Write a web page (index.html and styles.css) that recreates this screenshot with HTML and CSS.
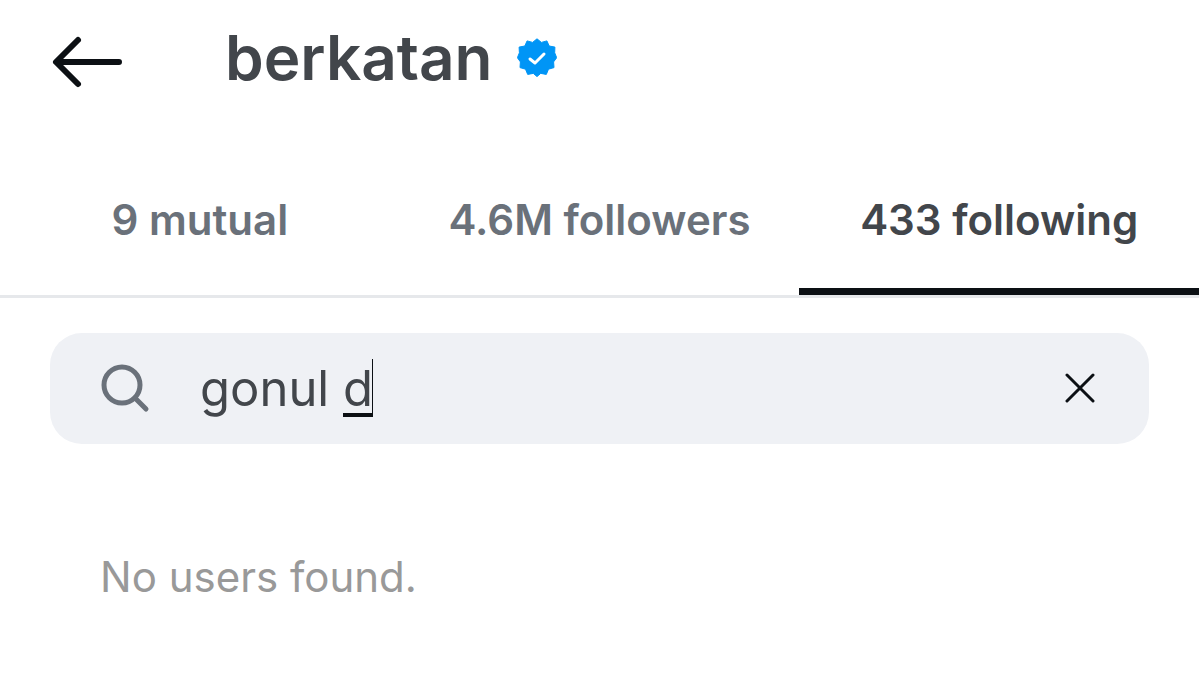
FILE: index.html
```html
<!DOCTYPE html>
<html lang="en">
<head>
<meta charset="utf-8">
<meta name="viewport" content="width=device-width, initial-scale=1">
<title>berkatan</title>
<link rel="stylesheet" href="styles.css">
</head>
<body>
<header class="header">
  <button class="icon-button back" type="button" aria-label="Back">
    <svg width="72" height="54" viewBox="0 0 72 54" fill="none" stroke="#0c1014" stroke-width="6" stroke-linecap="round" stroke-linejoin="round"><path d="M28 5 6 27l22 22M7 27h62"/></svg>
  </button>
  <h1 class="username">berkatan</h1>
  <svg class="verified" width="40" height="40" viewBox="0 0 40 40" role="img" aria-label="Verified"><path fill="#0095f6" stroke="#0095f6" stroke-width="1" stroke-linejoin="round" d="M20 .8l4.400 3.600 5.500-1.500 2.300 5.100 5.700 1.100-.2 5.700 2 4.900-3.100 4.200.4 5.700-5.500 1.600-2.200 5.200-5.600-1L20 38.600l-3.700-3.200-5.600 1-2.200-5.200L3 29.600l.4-5.700L.4 19.700l2-4.900-.3-5.700 5.700-1.100 2.300-5.100 5.500 1.500z"/><path fill="none" stroke="#fff" stroke-width="3" stroke-linecap="round" stroke-linejoin="round" d="M13 21l5 4 9-9"/></svg>
</header>
<nav class="tabs" role="tablist">
  <button class="tab" type="button" role="tab" aria-selected="false">9 mutual</button>
  <button class="tab" type="button" role="tab" aria-selected="false">4.6M followers</button>
  <button class="tab active" type="button" role="tab" aria-selected="true">433 following</button>
</nav>
<main class="content">
  <div class="search">
    <svg class="search-icon" width="50" height="50" viewBox="0 0 50 50" fill="none" stroke="#6a717a" stroke-width="5" stroke-linecap="round"><circle cx="22" cy="21" r="18"/><path d="M35 34l11 11"/></svg>
    <div class="field">
      <input class="search-input" type="text" value="gonul d" aria-label="Search">
      <span class="composing"></span>
    </div>
    <button class="icon-button" type="button" aria-label="Clear search">
      <svg width="32" height="32" viewBox="0 0 32 32" fill="none" stroke="#0c1014" stroke-width="3" stroke-linecap="round"><path d="M2 2l26 26M28 2L2 28"/></svg>
    </button>
  </div>
  <p class="empty">No users found.</p>
</main>
</body>
</html>
```
FILE: styles.css
```css
* {
  box-sizing: border-box;
}

body {
  margin: 0;
  background: #fff;
  color: #42464b;
  font-family: Inter, "Liberation Sans", sans-serif;
}

button {
  padding: 0;
  border: 0;
  background: none;
  font: inherit;
  color: inherit;
}

.icon-button,
.icon-button svg,
.verified,
.search-icon {
  display: block;
  flex: none;
}

.header {
  display: flex;
  align-items: center;
  height: 120px;
  padding: 0 50px 5px;
}

.back {
  padding-top: 8px;
}

.username {
  margin: 0 24px 0 103px;
  font-size: 62px;
  line-height: 72px;
  font-weight: 600;
}

.tabs {
  display: grid;
  grid-template-columns: repeat(3, 1fr);
  margin-top: 24px;
  border-bottom: 3px solid #e6e8eb;
}

.tab {
  height: 151px;
  padding-top: 8px;
  border-bottom: 7px solid transparent;
  font-size: 42px;
  line-height: 52px;
  font-weight: 600;
  color: #6a717a;
  white-space: nowrap;
}

.active {
  border-bottom-color: #0c1014;
  color: #42464b;
}

.content {
  padding: 35px 50px;
}

.search {
  display: flex;
  align-items: center;
  height: 111px;
  padding: 0 52px 0 50px;
  border-radius: 32px;
  background: #eff1f5;
}

.field {
  position: relative;
  flex: 1;
  min-width: 0;
  margin-left: 50px;
}

.search-input {
  display: block;
  width: 100%;
  height: 60px;
  padding: 0;
  border: 0;
  outline: 0;
  background: none;
  font: inherit;
  font-size: 49px;
  color: #42464b;
}

.composing {
  position: absolute;
  top: 0;
  left: 143px;
  width: 30px;
  height: 58px;
  border-right: 1px solid #0c1014;
  border-bottom: 4px solid #0c1014;
}

.empty {
  margin: 107px 50px 0;
  font-size: 42px;
  line-height: 52px;
  color: #999;
}
```
